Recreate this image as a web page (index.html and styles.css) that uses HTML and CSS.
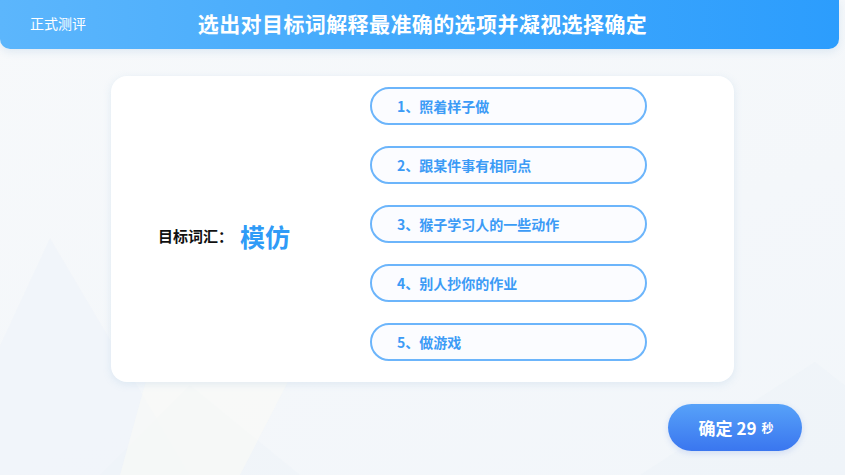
FILE: index.html
```html
<!DOCTYPE html>
<html lang="zh">
<head>
<meta charset="utf-8">
<link rel="stylesheet" href="styles.css">
</head>
<body>
<div class="page">
  <svg class="bg-deco" width="845" height="475" viewBox="0 0 845 475" aria-hidden="true">
    <polygon points="-60,475 50,238 190,475" fill="#eff4f9" opacity="0.7"/>
    <polygon points="100,475 190,385 300,475" fill="#eef4f8" opacity="0.6"/>
    <polygon points="640,475 815,362 960,475" fill="#eef3f8" opacity="0.7"/>
    <polygon points="160,330 330,300 240,475 120,475" fill="#fbfbf6" opacity="0.5"/>
  </svg>
  <header class="topbar">
    <span class="mode">正式测评</span>
    <h1 class="title">选出对目标词解释最准确的选项并凝视选择确定</h1>
  </header>
  <main class="content">
    <section class="card">
      <div class="target">
        <span class="target-label">目标词汇：</span>
        <span class="target-word">模仿</span>
      </div>
      <ul class="options">
        <li class="option">1、照着样子做</li>
        <li class="option">2、跟某件事有相同点</li>
        <li class="option">3、猴子学习人的一些动作</li>
        <li class="option">4、别人抄你的作业</li>
        <li class="option">5、做游戏</li>
      </ul>
    </section>
    <div class="actions">
      <button class="confirm">确定 <span class="sec">29</span><span class="unit">秒</span></button>
    </div>
  </main>
</div>
</body>
</html>
```

FILE: styles.css
```css
* { box-sizing: border-box; }
html, body { margin: 0; padding: 0; }
body {
  width: 845px;
  height: 475px;
  overflow: hidden;
  font-family: "Noto Sans CJK SC", "Noto Sans", sans-serif;
  background: #f5f8fb;
}
.page {
  position: relative;
  width: 845px;
  height: 475px;
  background: linear-gradient(160deg, #f7f9fb 0%, #f4f7fa 60%, #f2f6fa 100%);
}
.bg-deco {
  position: absolute;
  left: 0;
  top: 0;
  z-index: 0;
}
.topbar {
  position: relative;
  z-index: 1;
  width: 839px;
  height: 49px;
  border-radius: 0 0 10px 10px;
  background: linear-gradient(90deg, #5cb6fc 0%, #44aafc 45%, #2c9dfd 100%);
  box-shadow: 0 3px 8px rgba(60, 120, 180, 0.12);
  display: flex;
  align-items: center;
}
.mode {
  position: absolute;
  left: 30px;
  top: 13px;
  font-size: 14px;
  line-height: 20px;
  color: #ffffff;
}
.title {
  margin: 0 0 3px 6px;
  width: 845px;
  text-align: center;
  font-size: 21px;
  letter-spacing: 0.4px;
  line-height: 28px;
  font-weight: 700;
  color: #ffffff;
}
.content {
  position: relative;
  z-index: 1;
  display: flex;
  flex-direction: column;
  padding: 27px 0 0 111px;
}
.card {
  width: 623px;
  height: 306px;
  background: #ffffff;
  border-radius: 16px;
  box-shadow: 0 2px 8px rgba(120, 170, 210, 0.18);
  display: flex;
  padding: 11px 0 0 47px;
}
.target {
  width: 212px;
  display: flex;
  align-items: center;
  padding-top: 2px;
}
.target-label {
  font-size: 15px;
  font-weight: 700;
  color: #111111;
  width: 82px;
}
.target-word {
  font-size: 25px;
  font-weight: 700;
  color: #2f9bf7;
}
.options {
  list-style: none;
  margin: 0;
  padding: 0;
  display: flex;
  flex-direction: column;
  gap: 21px;
}
.option {
  width: 277px;
  height: 38px;
  border: 2px solid #6cb5fb;
  border-radius: 19px;
  background: #fbfcff;
  padding-left: 25px;
  display: flex;
  align-items: center;
  font-size: 14px;
  font-weight: 700;
  color: #3c9bf6;
}
.actions {
  display: flex;
  justify-content: flex-end;
  width: 691px;
  margin-top: 22px;
}
.confirm {
  width: 134px;
  height: 47px;
  border: none;
  border-radius: 24px;
  background: linear-gradient(180deg, #57a2f9 0%, #3a76ef 100%);
  box-shadow: 0 2px 6px rgba(60, 110, 220, 0.18);
  color: #ffffff;
  font-family: inherit;
  font-size: 17px;
  font-weight: 700;
  display: flex;
  align-items: center;
  justify-content: center;
  padding: 0 0 0 2px;
}
.sec {
  margin-left: 4px;
  font-size: 17px;
}
.unit {
  margin-left: 5px;
  font-size: 12px;
}
```
